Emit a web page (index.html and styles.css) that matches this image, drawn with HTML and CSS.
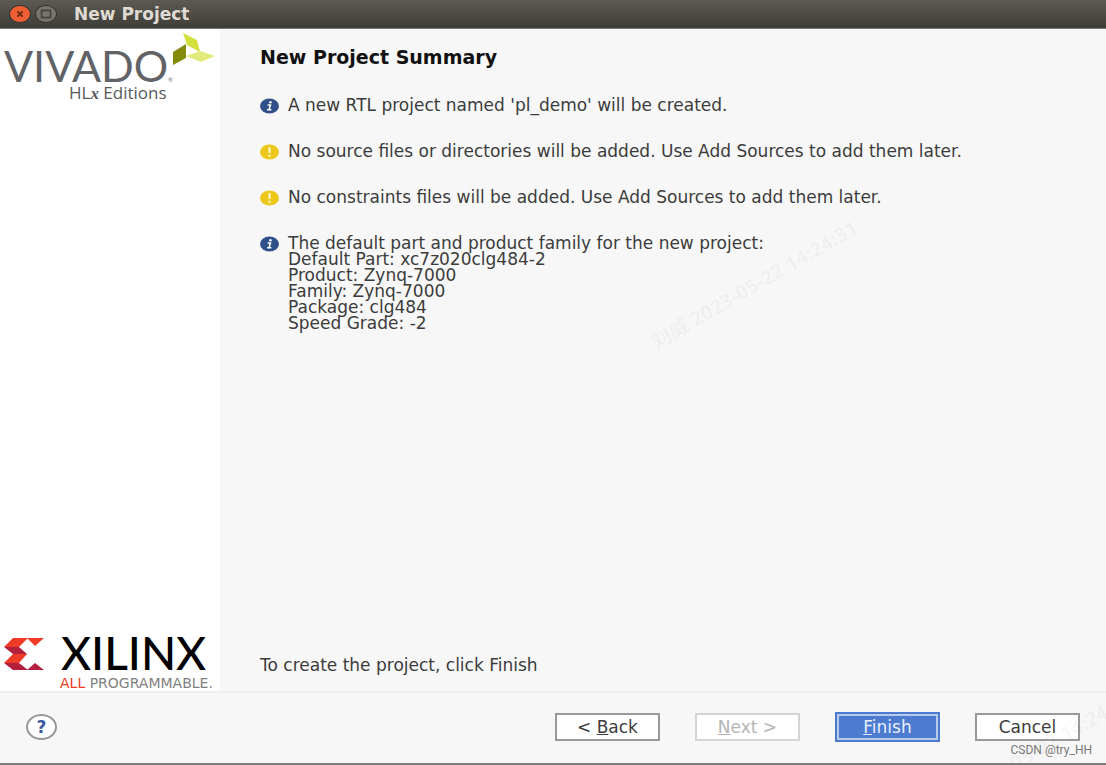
FILE: index.html
```html
<!DOCTYPE html>
<html lang="en">
<head>
    <meta charset="UTF-8">
    <meta name="viewport" content="width=device-width, initial-scale=1.0">
    <title>New Project</title>
    <link rel="stylesheet" href="styles.css">
</head>
<body>
    <header class="titlebar">
        <button class="window-button close" type="button" aria-label="Close">
            <svg viewBox="0 0 22 18"><path d="M8 6l6 6M14 6l-6 6"/></svg>
        </button>
        <button class="window-button maximize" type="button" aria-label="Maximize">
            <svg viewBox="0 0 22 18"><rect x="6" y="5" width="10" height="8"/></svg>
        </button>
        <span class="window-title">New Project</span>
    </header>

    <div class="main">
        <aside class="sidebar">
            <svg class="logo" viewBox="0 0 220 76" role="img" aria-label="Vivado HLx Editions">
                <text class="vivado-name" x="4" y="53">VIVADO</text>
                <text class="vivado-mark" x="168" y="53">®</text>
                <text class="vivado-edition" x="69" y="70">HL<tspan class="vivado-x">x</tspan> Editions</text>
                <path fill="#d3e03b" d="M183 4l14 7 3 12-13-7z"/>
                <path fill="#838a0c" d="M173 23l13-8v14l-13 7z"/>
                <path fill="#e2ea7c" d="M186 27l14-5 15 5-14 6z"/>
            </svg>
            <svg class="logo" viewBox="0 0 220 60" role="img" aria-label="Xilinx All Programmable">
                <path fill="#ee3a26" d="M13 7h15l-9 9H4z"/>
                <path fill="#ee3a26" d="M27 7h17l-9 8z"/>
                <path fill="#b31f3d" d="M4 16h15l8 7H13z"/>
                <path fill="#ee3a26" d="M13 23h14l-8 9H4z"/>
                <path fill="#b31f3d" d="M4 32h15l9 7H13z"/>
                <path fill="#b31f3d" d="M35 32l9 7H27z"/>
                <text class="xilinx-name" x="61" y="39">XILINX</text>
                <text class="xilinx-line" x="60" y="57"><tspan class="xilinx-all">ALL</tspan> PROGRAMMABLE.</text>
            </svg>
        </aside>

        <main class="content">
            <h1>New Project Summary</h1>
            <ul class="summary">
                <li>
                    <svg class="icon" viewBox="0 0 20 16"><ellipse cx="10" cy="8" rx="10" ry="8" fill="#31508a"/><circle cx="11" cy="4" r="1.3" fill="#fff"/><path d="M8 7h3l-1.5 5H12M7.5 12h3" fill="none" stroke="#fff" stroke-width="1.6"/></svg>
                    <p>A new RTL project named 'pl_demo' will be created.</p>
                </li>
                <li>
                    <svg class="icon" viewBox="0 0 20 16"><ellipse cx="10" cy="8" rx="10" ry="8" fill="#edc71a"/><path d="M10 3v6M10 11v2" stroke="#fffbe0" stroke-width="2"/></svg>
                    <p>No source files or directories will be added. Use Add Sources to add them later.</p>
                </li>
                <li>
                    <svg class="icon" viewBox="0 0 20 16"><ellipse cx="10" cy="8" rx="10" ry="8" fill="#edc71a"/><path d="M10 3v6M10 11v2" stroke="#fffbe0" stroke-width="2"/></svg>
                    <p>No constraints files will be added. Use Add Sources to add them later.</p>
                </li>
                <li>
                    <svg class="icon" viewBox="0 0 20 16"><ellipse cx="10" cy="8" rx="10" ry="8" fill="#31508a"/><circle cx="11" cy="4" r="1.3" fill="#fff"/><path d="M8 7h3l-1.5 5H12M7.5 12h3" fill="none" stroke="#fff" stroke-width="1.6"/></svg>
                    <p>The default part and product family for the new project:<br>
                    Default Part: xc7z020clg484-2<br>
                    Product: Zynq-7000<br>
                    Family: Zynq-7000<br>
                    Package: clg484<br>
                    Speed Grade: -2</p>
                </li>
            </ul>
            <p class="hint">To create the project, click Finish</p>
        </main>
    </div>

    <footer class="footer">
        <button class="help" type="button" aria-label="Help">?</button>
        <div class="buttons">
            <button class="btn" type="button">&lt; <u>B</u>ack</button>
            <button class="btn" type="button" disabled><u>N</u>ext &gt;</button>
            <button class="btn primary" type="button"><u>F</u>inish</button>
            <button class="btn" type="button">Cancel</button>
        </div>
    </footer>

    <div class="watermarks">
        <span class="stamp stamp-center">刘威 2023-05-22 14:24:31</span>
        <span class="stamp stamp-corner">刘威 2023-05-22 14:24:31</span>
        <span class="credit">CSDN @try_HH</span>
    </div>
</body>
</html>
```
FILE: styles.css
```css
* {
    box-sizing: border-box;
}

body {
    margin: 0;
    min-height: 100vh;
    display: flex;
    flex-direction: column;
    position: relative;
    background: #f7f7f7;
    border-bottom: 2px solid #7d7d7d;
    font-family: "DejaVu Sans", sans-serif;
    font-size: 17px;
    line-height: 16px;
    color: #3c3c3c;
}

h1, p, ul {
    margin: 0;
    padding: 0;
}

.titlebar {
    display: flex;
    align-items: center;
    gap: 4px;
    height: 29px;
    padding: 0 9px;
    background: linear-gradient(#5c5a52, #3e3d38);
    border-bottom: 1px solid #7a7974;
}

.window-button {
    width: 22px;
    height: 18px;
    padding: 0;
    border: 1px solid #33322e;
    border-radius: 50%;
    background: #77756c;
}

.window-button svg {
    display: block;
    width: 100%;
    height: 100%;
    fill: none;
    stroke: #46443e;
    stroke-width: 2;
}

.window-button.close {
    background: #ee6034;
}

.window-button.close svg {
    stroke: #6b2a12;
}

.window-title {
    margin-left: 13px;
    font-weight: bold;
    color: #dfdbd2;
}

.main {
    flex: 1;
    display: flex;
}

.sidebar {
    flex: 0 0 220px;
    display: flex;
    flex-direction: column;
    justify-content: space-between;
    background: #fff;
}

.logo {
    display: block;
    width: 100%;
    overflow: visible;
}

.vivado-name {
    font: 43px Lato, sans-serif;
    fill: #626366;
}

.vivado-mark {
    font: 6px Lato, sans-serif;
    fill: #777;
}

.vivado-edition {
    font: 17px "Open Sans", sans-serif;
    fill: #58595b;
}

.vivado-x {
    font-family: "Liberation Serif", serif;
    font-style: italic;
    font-weight: bold;
}

.xilinx-name {
    font: 500 46px Lato, sans-serif;
    fill: #000;
}

.xilinx-line {
    font: 14px "DejaVu Sans", sans-serif;
    fill: #808080;
}

.xilinx-all {
    fill: #ee3a26;
}

.content {
    flex: 1;
    display: flex;
    flex-direction: column;
    padding: 20px 40px 18px;
}

h1 {
    font-size: 19px;
    line-height: 16px;
    color: #111;
}

.summary {
    display: flex;
    flex-direction: column;
    gap: 29px;
    margin-top: 32px;
    list-style: none;
}

.summary li {
    display: flex;
    gap: 9px;
}

.icon {
    flex: none;
    width: 19px;
    height: 16px;
    margin-top: 1px;
}

.hint {
    margin-top: auto;
}

.footer {
    display: flex;
    align-items: center;
    justify-content: space-between;
    height: 72px;
    padding: 0 26px 2px;
    border-top: 2px solid #eee;
}

.help {
    width: 31px;
    height: 26px;
    padding: 0;
    border: 2px solid #999;
    border-radius: 50%;
    background: #fff;
    font: bold 17px "DejaVu Sans", sans-serif;
    line-height: 16px;
    color: #3a569c;
}

.buttons {
    display: flex;
    align-items: center;
    gap: 35px;
}

.btn {
    width: 105px;
    height: 28px;
    padding: 0;
    border: 2px solid #999;
    background: #fff;
    font: 17px "DejaVu Sans", sans-serif;
    line-height: 16px;
    color: #3c3c3c;
}

.btn:disabled {
    border-color: #d4d4d4;
    color: #b4b4b4;
}

.btn.primary {
    height: 30px;
    border-color: #4c7bd0;
    background: #4c7bd0;
    box-shadow: inset 0 0 0 2px #b6caee;
    color: #e6eefb;
}

.watermarks {
    position: absolute;
    inset: 0;
    overflow: hidden;
    pointer-events: none;
}

.stamp {
    position: absolute;
    font: bold 20px "Noto Sans", "Noto Sans CJK SC", sans-serif;
    line-height: 24px;
    white-space: nowrap;
    color: rgba(0, 0, 0, 0.04);
    transform: rotate(-30deg);
}

.stamp-center {
    top: 273px;
    right: 234px;
}

.stamp-corner {
    top: 743px;
    right: -41px;
}

.credit {
    position: absolute;
    right: 14px;
    bottom: 6px;
    font: 12px Roboto, sans-serif;
    color: #777;
}
```
